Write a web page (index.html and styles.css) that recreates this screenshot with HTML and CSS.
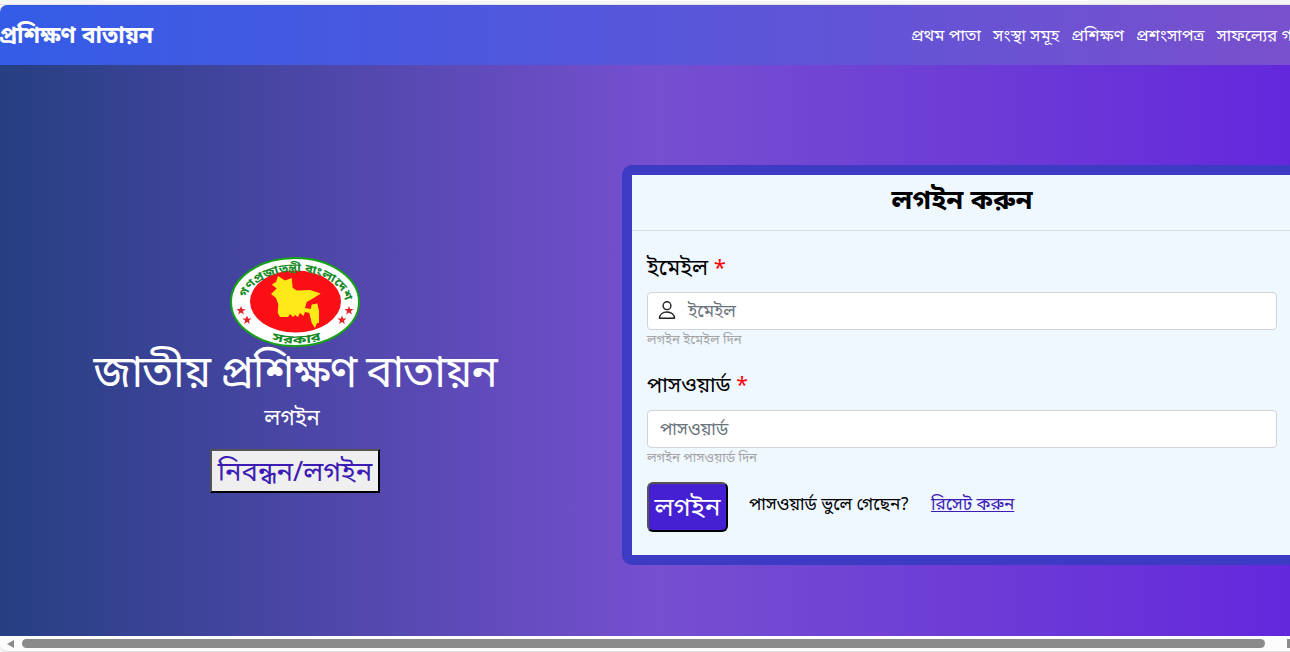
FILE: index.html
```html
<!DOCTYPE html>
<html lang="bn">
<head>
<meta charset="utf-8">
<title>প্রশিক্ষণ বাতায়ন</title>
<link rel="stylesheet" href="styles.css">
</head>
<body>
<div class="tabstrip"><div class="address"></div></div>
<header class="navbar">
  <a class="brand">প্রশিক্ষণ বাতায়ন</a>
  <nav class="nav">
    <a>প্রথম পাতা</a><a>সংস্থা সমূহ</a><a>প্রশিক্ষণ</a><a>প্রশংসাপত্র</a><a>সাফল্যের গল্প</a>
  </nav>
</header>
<main class="hero">
  <section class="intro">
    <svg class="logo" viewBox="0 0 130 90" width="130" height="90">
      <defs>
        <path id="arc-top" d="M16 41 A50 32.500 0 0 1 115 46"/>
        <path id="arc-bottom" d="M38 82 Q65 91 94 82"/>
        <path id="star" d="M0-4.500L1.200-1.400 4.500-1.400 1.900.7 2.900 4 0 2-2.900 4-1.900.7-4.500-1.400-1.200-1.400Z"/>
      </defs>
      <ellipse cx="65" cy="45" rx="64" ry="44" fill="#fff" stroke="#16a216" stroke-width="2"/>
      <ellipse cx="65.500" cy="44.500" rx="45.500" ry="31" fill="#fb0f17"/>
      <path fill="#fde818" d="M48 19L55 23.500 61.700 21 62.700 31 67 33.500 80 33 90.700 36.500 83 41.500 76.700 45 75 51 80.700 52 81.700 47.500 87.300 46.500 89 54 89 66 87 66 85 71 81.700 66 79.300 56 75 55 73.500 59 70 56 68 60 65 58 63 60 60 57 58 60 50 60 47.700 56 48.300 47.500 46 41 41 37 46.700 31.500 41.700 27.500 46 25Z"/>
      <g fill="#e42328"><use href="#star" x="11" y="53.500"/><use href="#star" x="17" y="63"/><use href="#star" x="119" y="53.500"/><use href="#star" x="112" y="63"/></g>
      <text class="seal-text"><textPath href="#arc-top" textLength="121" lengthAdjust="spacingAndGlyphs">গণপ্রজাতন্ত্রী বাংলাদেশ</textPath></text>
      <text class="seal-text"><textPath href="#arc-bottom" startOffset="4" textLength="50" lengthAdjust="spacingAndGlyphs">সরকার</textPath></text>
    </svg>
    <h1 class="title">জাতীয় প্রশিক্ষণ বাতায়ন</h1>
    <p class="subtitle">লগইন</p>
    <button class="register">নিবন্ধন/লগইন</button>
  </section>
  <form class="card">
    <h2 class="card-title">লগইন করুন</h2>
    <div class="card-body">
      <label class="label">ইমেইল <span class="req">*</span></label>
      <div class="field">
        <svg class="user" viewBox="0 0 18 20" width="18" height="20" fill="none" stroke="#222" stroke-width="1.400"><circle cx="9" cy="5.700" r="3.900"/><path d="M1.500 18.300C1.500 14.500 4.700 12 9 12s7.500 2.500 7.500 6.300z" stroke-linejoin="round"/></svg>
        <span>ইমেইল</span>
      </div>
      <small class="hint">লগইন ইমেইল দিন</small>
      <label class="label narrow">পাসওয়ার্ড <span class="req">*</span></label>
      <div class="field"><span>পাসওয়ার্ড</span></div>
      <small class="hint">লগইন পাসওয়ার্ড দিন</small>
      <div class="actions">
        <button type="button" class="login">লগইন</button>
        <span class="forgot">পাসওয়ার্ড ভুলে গেছেন?</span>
        <a class="reset">রিসেট করুন</a>
      </div>
    </div>
  </form>
</main>
<footer class="scrollbar"><i class="arrow-left"></i><i class="thumb"></i><i class="arrow-right"></i></footer>
</body>
</html>
```
FILE: styles.css
```css
* { box-sizing: border-box; }
body { margin: 0; width: 1290px; height: 652px; overflow: hidden; background: #f5f5f5; font-family: "Noto Sans Bengali", "Noto Sans", sans-serif; display: flex; flex-direction: column; }
.tabstrip { height: 5px; flex: none; padding-left: 103px; border-bottom: 1px solid #e5e5e5; }
.address { width: 985px; height: 1px; background: #fff; }
.navbar { height: 60px; flex: none; display: flex; align-items: center; justify-content: space-between; background: linear-gradient(90deg, #345ce7, #7950cd); color: #fff; border-top-left-radius: 7px; white-space: nowrap; }
.brand { font-size: 23px; font-weight: 700; padding-top: 4px; margin-left: -1px; }
.nav { display: flex; gap: 12px; width: 379px; overflow: hidden; padding-top: 4px; font-size: 16.5px; line-height: 40px; }
.nav a { flex: none; }
.hero { height: 571px; flex: none; display: flex; background: linear-gradient(90deg, #263f82 0%, #764fd0 51%, #6428dc 100%); }
.intro { width: 622px; flex: none; display: flex; flex-direction: column; align-items: center; padding: 192px 32px 0 0; white-space: nowrap; color: #fff; }
.logo { flex: none; }
.seal-text { font-size: 11.5px; font-weight: 700; fill: #168b25; }
.title { margin: 0; font-size: 44px; font-weight: 400; line-height: 59px; height: 48px; letter-spacing: -1.15px; }
.subtitle { margin: 7px 0 0; font-size: 22px; line-height: 35px; height: 30px; padding-right: 6px; }
.register { margin: 17px 0 0; width: 170px; height: 44px; padding: 6px 0 0; font-family: inherit; font-size: 27.5px; line-height: 34px; color: #3d1cb5; background: #efefef; border: 2px outset #000; white-space: nowrap; }
.card { margin: 100px 0 0; width: 680px; height: 400px; flex: none; border: 10px solid #3d3bc3; border-radius: 10px; background: #eff7ff; color: #000; }
.card-title { margin: 0; height: 56px; border-bottom: 1px solid #d5dde5; text-align: center; font-size: 27.5px; font-weight: 700; line-height: 54px; }
.card-body { padding: 17px 15px 0; display: flex; flex-direction: column; }
.label { height: 40px; font-size: 22px; line-height: 44px; margin: 0 0 4px; }
.narrow { font-size: 21.2px; line-height: 43px; }
.req { color: #f00; }
.field { width: 630px; height: 38px; display: flex; align-items: center; gap: 12px; padding-left: 12px; background: #fff; border: 1px solid #ced4da; border-radius: 4px; color: #6c757d; font-size: 17.3px; line-height: 36px; }
.field span { padding-top: 4px; }
.user { margin: -2px 0 0 -2px; }
.hint { height: 20px; margin-bottom: 16px; font-size: 13.1px; line-height: 21px; color: #a5a5a5; }
.actions { margin-top: -2px; display: flex; align-items: flex-start; white-space: nowrap; font-size: 17.2px; line-height: 47px; }
.login { width: 81px; height: 50px; padding: 6px 0 0; font-family: inherit; font-size: 26.2px; line-height: 40px; color: #fff; background: #451fd2; border: 2px outset #000; border-radius: 6px; }
.forgot { margin-left: 21px; }
.reset { margin-left: 22px; color: #3d1cb5; text-decoration: underline; }
.scrollbar { height: 16px; flex: none; display: flex; align-items: center; background: #fcfcfc; border-bottom: 1px solid #ddd; border-bottom-left-radius: 7px; }
.scrollbar i { flex: none; }
.arrow-left { margin: 0 8px 0 7px; border: solid transparent; border-width: 4px 7px 4px 0; border-right-color: #8b8b8b; }
.thumb { width: 1243px; height: 9px; border-radius: 5px; background: #8b8b8b; }
.arrow-right { margin-left: 22px; width: 3px; height: 9px; background: #8b8b8b; }
```
